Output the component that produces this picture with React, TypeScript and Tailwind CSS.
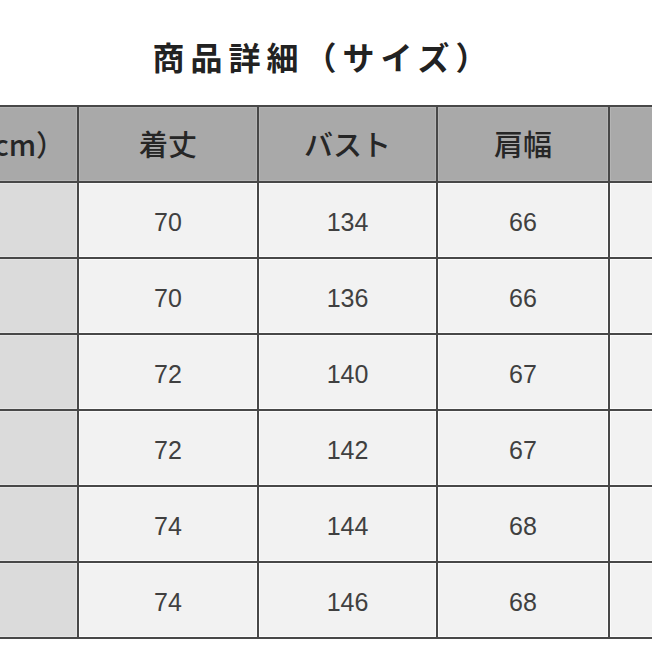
const headers = ["サイズ（cm）", "着丈", "バスト", "肩幅", "袖丈"];

const rows = [
  ["", "70", "134", "66", ""],
  ["", "70", "136", "66", ""],
  ["", "72", "140", "67", ""],
  ["", "72", "142", "67", ""],
  ["", "74", "144", "68", ""],
  ["", "74", "146", "68", ""],
];

const colWidths = ["w-[178px]", "w-[178px]", "w-[177px]", "w-[170px]", "w-[178px]"];

const App = () => {
  return (
    <div className="w-[652px] h-[652px] overflow-hidden bg-white">
      <div className="h-[105px] flex items-center justify-center pt-[6px] pr-[6px]">
        <h1
          className="text-[32px] font-bold tracking-[6px] text-[#222] leading-none"
          style={{ fontFamily: '"Noto Sans CJK JP", sans-serif' }}
        >
          商品詳細（サイズ）
        </h1>
      </div>

      <div className="-ml-[103px] w-max bg-[#484848] p-[2px] flex flex-col gap-[2px]">
        <div className="flex gap-[2px]">
          {headers.map((h, i) => (
            <div
              key={i}
              className={`${colWidths[i]} h-[74px] shrink-0 bg-[#a9a9a9] border border-[#b4b4b4] flex items-center text-[29px] font-medium text-[#262626] whitespace-nowrap ${
                i === 0 ? "justify-end pr-[11px]" : "justify-center"
              }`}
              style={{ fontFamily: '"Noto Sans CJK JP", sans-serif' }}
            >
              {h}
            </div>
          ))}
        </div>
        {rows.map((row, r) => (
          <div key={r} className="flex gap-[2px]">
            {row.map((v, i) => (
              <div
                key={i}
                className={`${colWidths[i]} h-[74px] shrink-0 flex items-center justify-center pt-[6px] text-[25px] text-[#404040] border ${
                  i === 0 ? "bg-[#dbdbdb] border-[#e4e4e4]" : "bg-[#f2f2f2] border-[#fbfbfb]"
                }`}
                style={{ fontFamily: '"Liberation Sans", Arial, sans-serif' }}
              >
                {v}
              </div>
            ))}
          </div>
        ))}
      </div>
    </div>
  );
};

export default App;
